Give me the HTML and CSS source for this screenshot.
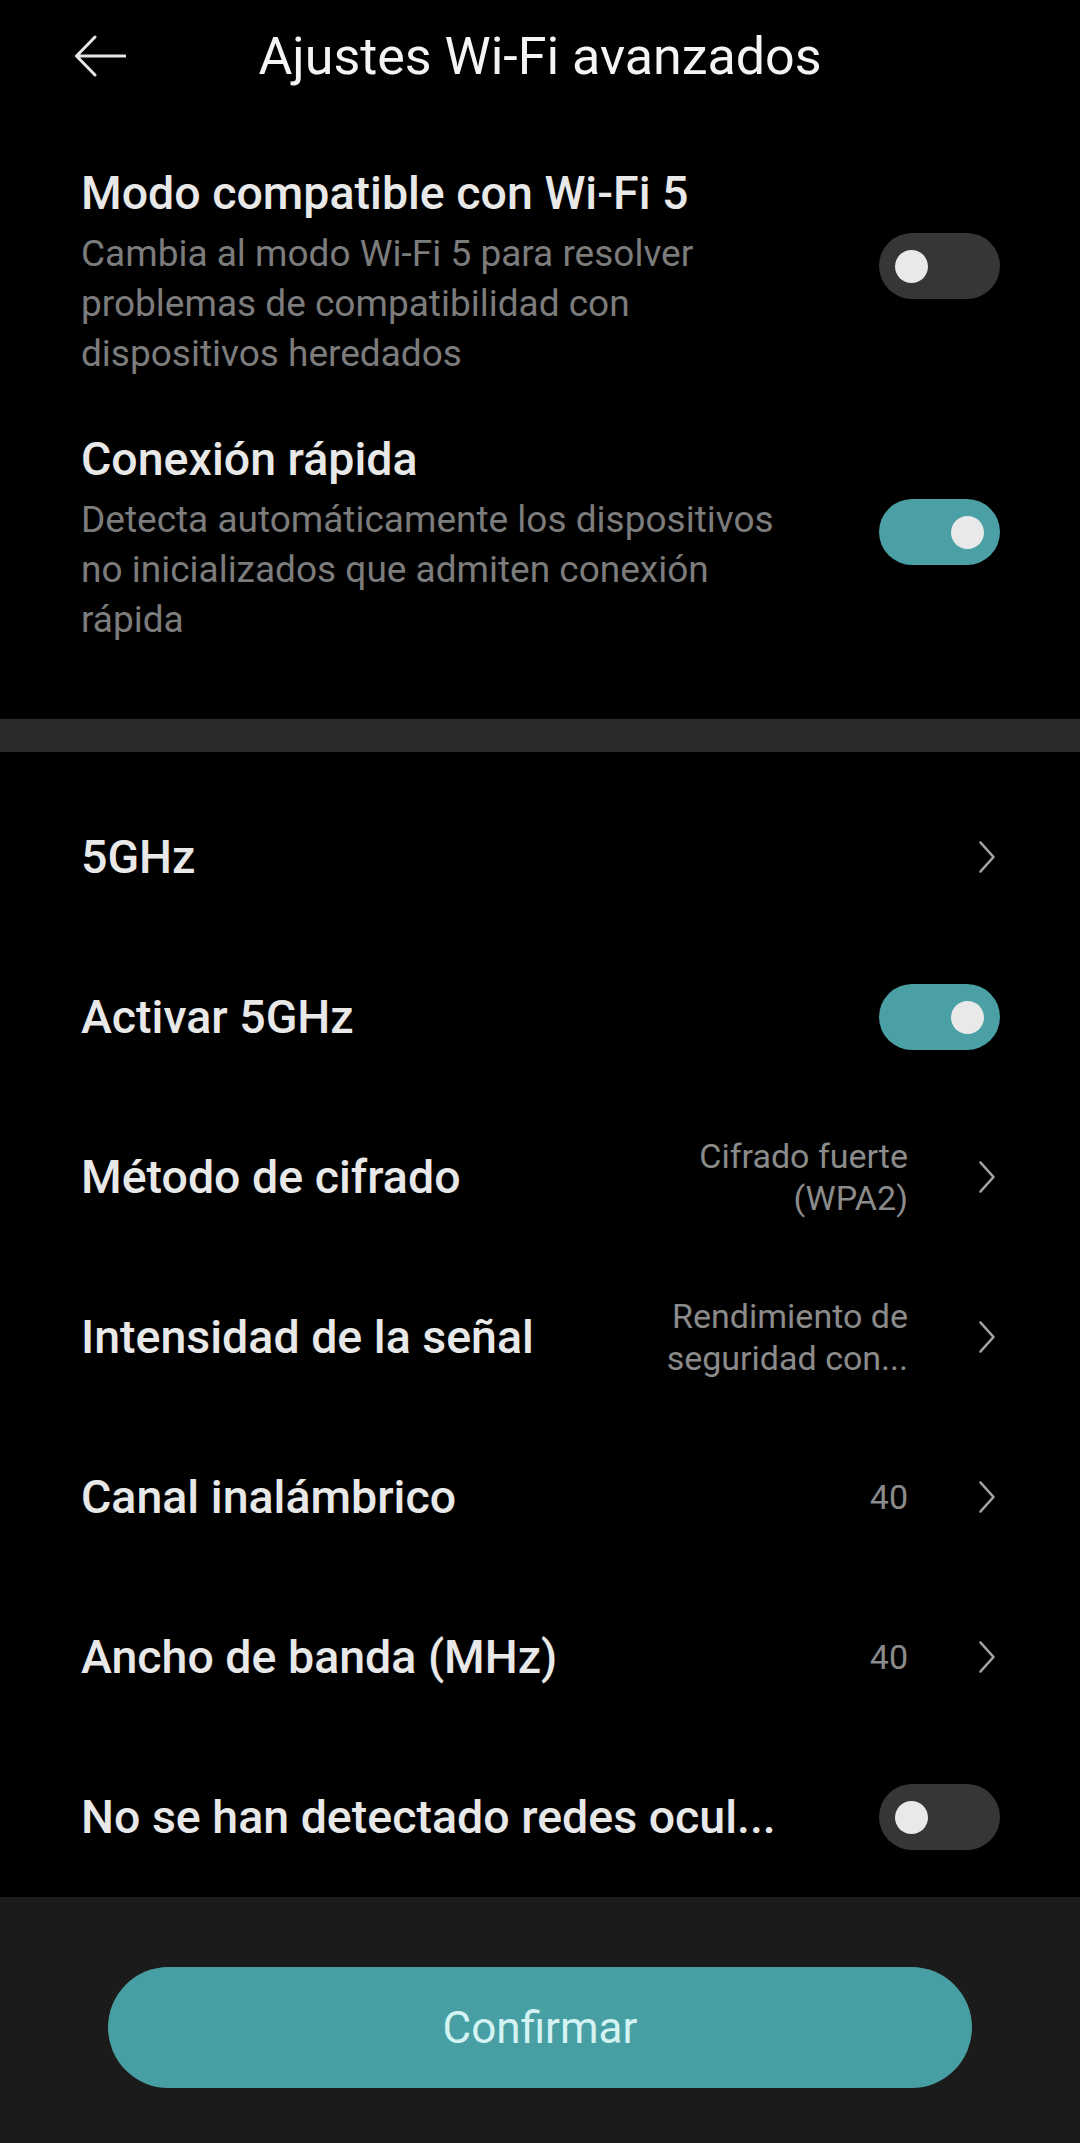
FILE: index.html
```html
<!DOCTYPE html>
<html lang="es">
<head>
<meta charset="utf-8">
<title>Ajustes Wi-Fi avanzados</title>
<link rel="stylesheet" href="styles.css">
</head>
<body>
<div class="screen">
  <header class="topbar">
    <span class="back">
      <svg width="52" height="42" viewBox="0 0 52 42"><path d="M21 2 L2.5 21 L21 40 M2.5 21 H51" fill="none" stroke="#e8e8e8" stroke-width="3" stroke-linecap="round" stroke-linejoin="round"/></svg>
    </span>
    <h1 class="title">Ajustes Wi-Fi avanzados</h1>
  </header>

  <section class="group group-first">
    <div class="item">
      <div class="item-text">
        <div class="label">Modo compatible con Wi-Fi 5</div>
        <div class="summary">Cambia al modo Wi-Fi 5 para resolver problemas de compatibilidad con dispositivos heredados</div>
      </div>
      <span class="switch"><span class="knob"></span></span>
    </div>
    <div class="item">
      <div class="item-text">
        <div class="label">Conexión rápida</div>
        <div class="summary">Detecta automáticamente los dispositivos no inicializados que admiten conexión rápida</div>
      </div>
      <span class="switch on"><span class="knob"></span></span>
    </div>
  </section>

  <div class="divider"></div>

  <section class="group group-rows">
    <div class="row">
      <div class="label">5GHz</div>
      <span class="chev"><svg width="18" height="34" viewBox="0 0 18 34"><path d="M2.5 2.5 L15.5 17 L2.5 31.5" fill="none" stroke="#a6a6a6" stroke-width="2.6" stroke-linecap="round" stroke-linejoin="round"/></svg></span>
    </div>
    <div class="row">
      <div class="label">Activar 5GHz</div>
      <span class="switch on"><span class="knob"></span></span>
    </div>
    <div class="row">
      <div class="label">Método de cifrado</div>
      <div class="value">Cifrado fuerte<br>(WPA2)</div>
      <span class="chev"><svg width="18" height="34" viewBox="0 0 18 34"><path d="M2.5 2.5 L15.5 17 L2.5 31.5" fill="none" stroke="#a6a6a6" stroke-width="2.6" stroke-linecap="round" stroke-linejoin="round"/></svg></span>
    </div>
    <div class="row">
      <div class="label">Intensidad de la señal</div>
      <div class="value">Rendimiento de<br>seguridad con...</div>
      <span class="chev"><svg width="18" height="34" viewBox="0 0 18 34"><path d="M2.5 2.5 L15.5 17 L2.5 31.5" fill="none" stroke="#a6a6a6" stroke-width="2.6" stroke-linecap="round" stroke-linejoin="round"/></svg></span>
    </div>
    <div class="row">
      <div class="label">Canal inalámbrico</div>
      <div class="value">40</div>
      <span class="chev"><svg width="18" height="34" viewBox="0 0 18 34"><path d="M2.5 2.5 L15.5 17 L2.5 31.5" fill="none" stroke="#a6a6a6" stroke-width="2.6" stroke-linecap="round" stroke-linejoin="round"/></svg></span>
    </div>
    <div class="row">
      <div class="label">Ancho de banda (MHz)</div>
      <div class="value">40</div>
      <span class="chev"><svg width="18" height="34" viewBox="0 0 18 34"><path d="M2.5 2.5 L15.5 17 L2.5 31.5" fill="none" stroke="#a6a6a6" stroke-width="2.6" stroke-linecap="round" stroke-linejoin="round"/></svg></span>
    </div>
    <div class="row">
      <div class="label">No se han detectado redes ocul...</div>
      <span class="switch"><span class="knob"></span></span>
    </div>
  </section>

  <footer class="footer">
    <button class="confirm" type="button">Confirmar</button>
  </footer>
</div>
</body>
</html>
```

FILE: styles.css
```css
* { box-sizing: border-box; }
html, body {
  margin: 0;
  padding: 0;
  background: #000;
}
body {
  font-family: Roboto, "Noto Sans", "Liberation Sans", sans-serif;
  color: #e9e9e9;
}
.screen {
  width: 1080px;
  height: 2143px;
  display: flex;
  flex-direction: column;
  background: #000;
  overflow: hidden;
}
.topbar {
  position: relative;
  height: 112px;
  display: flex;
  align-items: center;
  justify-content: center;
}
.back {
  position: absolute;
  left: 74px;
  top: 35px;
  display: flex;
}
.title {
  margin: 0;
  font-size: 52px;
  font-weight: 400;
  color: #f4f4f4;
  letter-spacing: 0;
}
.group {
  padding-left: 81px;
  padding-right: 80px;
}
.group-first {
  padding-top: 27px;
  padding-bottom: 48px;
}
.item {
  display: flex;
  align-items: center;
  padding: 26px 0;
  gap: 40px;
}
.item .switch {
  margin-bottom: 12px;
}
.item-text {
  flex: 1;
  min-width: 0;
}
.label {
  font-size: 46.5px;
  line-height: 56px;
  font-weight: 500;
  color: #e8e8e8;
  white-space: nowrap;
}
.summary {
  margin-top: 8px;
  font-size: 37px;
  line-height: 50px;
  font-weight: 400;
  color: #7c7c7c;
  max-width: 700px;
}
.switch {
  flex: none;
  position: relative;
  width: 121px;
  height: 66px;
  border-radius: 33px;
  background: #363636;
  display: flex;
  align-items: center;
  padding: 0 16px;
}
.switch .knob {
  width: 33px;
  height: 33px;
  border-radius: 50%;
  background: #e9e9e9;
}
.switch.on {
  background: #4aa0a4;
  justify-content: flex-end;
}
.divider {
  height: 33px;
  background: #2b2b2b;
  flex: none;
}
.group-rows {
  padding-top: 25px;
  flex: 1;
}
.row {
  height: 160px;
  display: flex;
  align-items: center;
}
.row .label {
  flex: 1;
  min-width: 0;
}
.value {
  flex: none;
  text-align: right;
  font-size: 34px;
  line-height: 42px;
  color: #8b8b8b;
  margin-right: 70px;
}
.chev {
  flex: none;
  display: flex;
  margin-right: 4px;
}
.footer {
  flex: none;
  height: 246px;
  background: #1b1b1b;
  padding: 70px 108px 0;
}
.confirm {
  width: 100%;
  height: 121px;
  border: none;
  border-radius: 61px;
  background: #489fa3;
  color: #d4f3f3;
  font-family: Roboto, "Noto Sans", sans-serif;
  font-size: 44px;
  font-weight: 400;
  padding: 0;
}
```
